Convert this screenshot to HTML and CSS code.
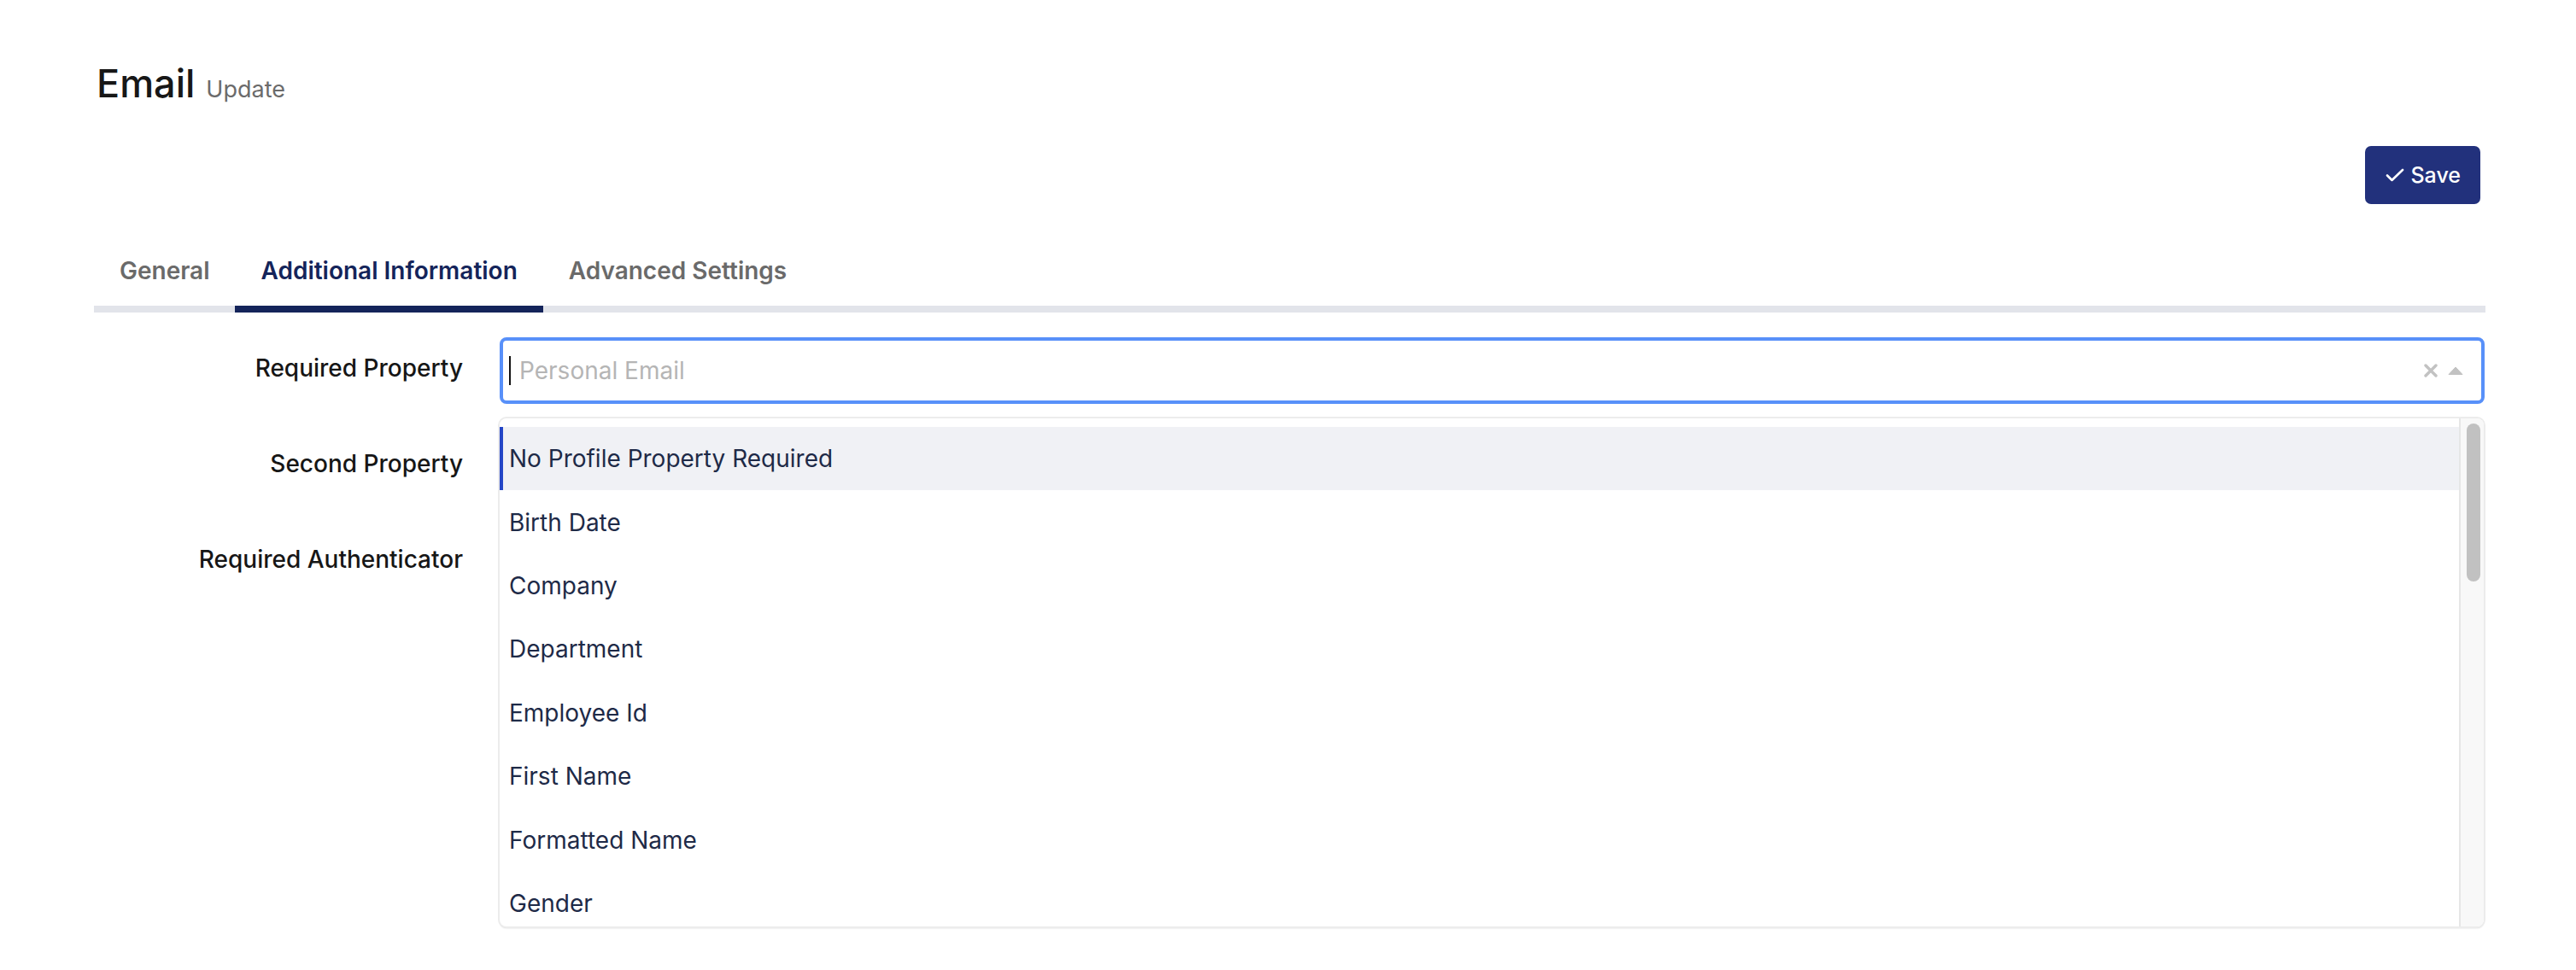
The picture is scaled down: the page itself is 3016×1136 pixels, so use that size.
FILE: index.html
```html
<!DOCTYPE html>
<html lang="en">
<head>
  <meta charset="UTF-8">
  <title>Email - Update</title>
  <link rel="stylesheet" href="styles.css">
</head>
<body>
  <div class="page">
    <h1 class="page-title">Email <small>Update</small></h1>

    <div class="toolbar">
      <button type="button" class="btn-save">
        <svg width="22" height="16" viewBox="0 0 22 16" aria-hidden="true">
          <path d="M2 8.5 L7.5 14 L20 2" fill="none" stroke="#fff" stroke-width="2.6" stroke-linecap="round" stroke-linejoin="round"/>
        </svg>
        Save
      </button>
    </div>

    <nav class="tabs">
      <a class="tab">General</a>
      <a class="tab active">Additional Information</a>
      <a class="tab">Advanced Settings</a>
    </nav>

    <form class="form">
      <div class="row">
        <label class="row-label">Required Property</label>
        <div class="select">
          <div class="select-control focused">
            <span class="caret"></span>
            <span class="placeholder">Personal Email</span>
            <span class="select-icons">
              <svg width="16" height="16" viewBox="0 0 16 16" aria-hidden="true">
                <path d="M2 2 L14 14 M14 2 L2 14" stroke="#c2c2c2" stroke-width="3.4" stroke-linecap="round"/>
              </svg>
              <svg width="18" height="10" viewBox="0 0 18 10" aria-hidden="true">
                <path d="M1 9.5 L9 1 L17 9.5 Z" fill="#c2c2c2" stroke="#c2c2c2" stroke-width="1" stroke-linejoin="round"/>
              </svg>
            </span>
          </div>

          <!-- otwarte menu -->
          <div class="select-menu">
            <ul class="menu-list">
              <li class="option selected">No Profile Property Required</li>
              <li class="option">Birth Date</li>
              <li class="option">Company</li>
              <li class="option">Department</li>
              <li class="option">Employee Id</li>
              <li class="option">First Name</li>
              <li class="option">Formatted Name</li>
              <li class="option">Gender</li>
            </ul>
            <div class="menu-scroll"><div class="menu-thumb"></div></div>
          </div>
        </div>
      </div>

      <div class="row">
        <label class="row-label">Second Property</label>
        <div class="select-control"></div>
      </div>

      <div class="row">
        <label class="row-label">Required Authenticator</label>
        <div class="select-control"></div>
      </div>
    </form>
  </div>
</body>
</html>
```

FILE: styles.css
```css
/* Reset */
* {
  box-sizing: border-box;
  margin: 0;
  padding: 0;
}

body {
  font-family: Inter, "Noto Sans", sans-serif;
  background: #fff;
  color: #1a1a1a;
  min-height: 1136px;
}

.page {
  padding: 72px 106px 0 110px;
}

/* Naglowek */
.page-title {
  display: flex;
  align-items: baseline;
  gap: 13px;
  font-size: 45px;
  font-weight: 500;
  line-height: 52px;
  color: #171717;
  padding-left: 3px;
}

.page-title small {
  font-size: 27px;
  font-weight: 400;
  line-height: 1;
  color: #6b6b6b;
}

/* Pasek z przyciskiem */
.toolbar {
  display: flex;
  justify-content: flex-end;
  margin-top: 47px;
  padding-right: 6px;
}

.btn-save {
  display: flex;
  align-items: center;
  gap: 7px;
  height: 68px;
  padding: 0 23px 0 24px;
  background: #22317c;
  color: #fff;
  border: none;
  border-radius: 7px;
  font-family: inherit;
  font-size: 25px;
  font-weight: 500;
}

/* Zakladki */
.tabs {
  display: flex;
  margin-top: 61px;
  border-bottom: 8px solid #e2e4ea;
}

.tab {
  padding: 0 30px 24px;
  margin-bottom: -8px;
  border-bottom: 8px solid transparent;
  font-size: 28px;
  font-weight: 600;
  line-height: 34px;
  color: #6a6a6a;
}

.tab.active {
  color: #14245a;
  border-bottom-color: #14245a;
}

/* Formularz */
.form {
  display: flex;
  flex-direction: column;
  gap: 34px;
  margin-top: 29px;
}

.row {
  display: grid;
  grid-template-columns: 432px 1fr;
  column-gap: 43px;
  align-items: center;
}

.row-label {
  text-align: right;
  font-size: 28px;
  font-weight: 450;
  color: #161616;
  padding-bottom: 6px;
}

.select {
  position: relative;
}

.select-control {
  display: flex;
  align-items: center;
  height: 78px;
  margin-right: 1px;
  border: 2px solid #d9d9d9;
  border-radius: 8px;
  background: #fff;
}

.select-control.focused {
  border: 4px solid #5890f9;
  padding: 0 0 0 7px;
}

.caret {
  width: 2px;
  height: 34px;
  background: #111;
  margin-right: 10px;
}

.placeholder {
  flex: 1;
  font-size: 28px;
  color: #b5b5b5;
}

.select-icons {
  display: flex;
  align-items: center;
  gap: 12px;
  padding-right: 21px;
}

/* Rozwiniete menu */
.select-menu {
  position: absolute;
  top: 95px;
  left: 0;
  right: 2px;
  height: 595px;
  display: flex;
  overflow: hidden;
  background: #fff;
  border-radius: 8px;
  box-shadow: 0 0 0 2px #ececec, 0 2px 2px rgba(0, 0, 0, 0.18);
}

.menu-list {
  flex: 1;
  list-style: none;
  padding-top: 10px;
}

.menu-scroll {
  width: 29px;
  flex-shrink: 0;
  padding: 6px 0 0 7px;
  background: #f8f8f8;
  border-left: 2px solid #e6e6e6;
}

.menu-thumb {
  width: 16px;
  height: 185px;
  border-radius: 8px;
  background: #c1c1c1;
}

.option {
  display: flex;
  align-items: center;
  height: 74.4px;
  padding-left: 11px;
  font-size: 28px;
  color: #1e2a47;
}

.option.selected {
  background: #f0f1f5;
  border-left: 4px solid #2446c6;
  padding-left: 7px;
}
```
